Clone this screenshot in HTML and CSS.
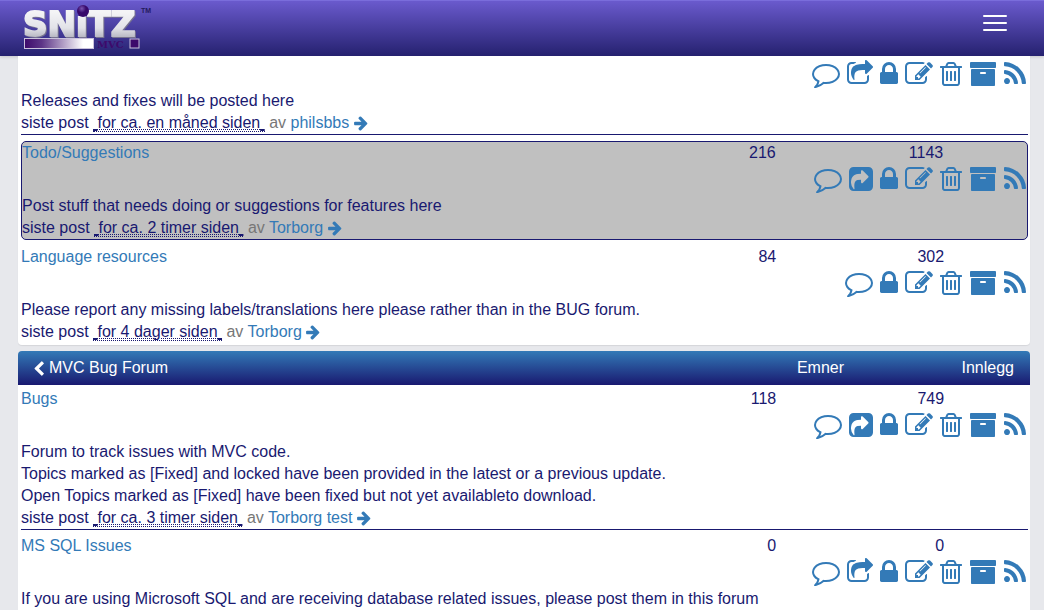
FILE: index.html
```html
<!DOCTYPE html>
<html lang="no">
<head>
<meta charset="utf-8">
<meta name="viewport" content="width=device-width, initial-scale=1">
<title>Snitz MVC</title>
<link rel="stylesheet" href="styles.css">
</head>
<body>
<svg class="sprite" aria-hidden="true">
  <symbol id="comment" viewBox="0 0 1792 1792"><path d="M896 384q-204 0-381.5 69.5t-282 187.5-104.5 255q0 112 71.5 213.5t201.5 175.5l87 50-27 96q-24 91-70 172 152-63 275-171l43-38 57 6q69 8 130 8 204 0 381.5-69.5t282-187.5 104.5-255-104.5-255-282-187.5-381.5-69.5zm896 512q0 174-120 321.5t-326 233-450 85.5q-70 0-145-8-198 175-460 242-49 14-114 22h-5q-15 0-27-10.5t-16-27.5v-1q-3-4-.5-12t2-10 4.5-9.5l6-9 7-8.5 8-9q7-8 31-34.5t34.5-38 31-39.5 32.5-51 27-59 26-76q-157-89-247.5-220t-90.5-281q0-174 120-321.5t326-233 450-85.5 450 85.5 326 233 120 321.5z"/></symbol>
  <symbol id="share-open" viewBox="64 0 1664 1792"><path d="M1472 989v259q0 119-84.5 203.5t-203.5 84.5h-832q-119 0-203.5-84.5t-84.5-203.5v-832q0-119 84.5-203.5t203.5-84.5h255q13 0 22.500 9.500t9.500 22.500q0 27-26 32-77 26-133 60-10 4-16 4h-112q-66 0-113 47t-47 113v832q0 66 47 113t113 47h832q66 0 113-47t47-113v-214q0-19 18-29 28-13 54-37 16-16 35-8 21 9 21 29zm237-496l-384 384q-18 19-45 19-12 0-25-5-39-17-39-59v-192h-160q-323 0-438 131-119 137-74 473 3 23-20 34-8 2-12 2-16 0-26-13-10-14-21-31t-39.5-68.5-49.5-99.5-38.5-114-17.5-122q0-49 3.500-91t14-90 28-88 47-81.5 68.500-74 94.500-61.5 124.500-48.5 159.500-30.5 196.500-11h160v-192q0-42 39-59 13-5 25-5 26 0 45 19l384 384q19 19 19 45t-19 45z"/></symbol>
  <symbol id="share" viewBox="128 0 1536 1792"><path d="M1005 1147l352-352q19-19 19-45t-19-45l-352-352q-30-31-69-14-40 17-40 59v160q-119 0-216 19.5t-162.5 51-114 79-76.5 95.5-44.5 109-21.5 111.5-5 110.5q0 181 167 404 11 12 25 12 7 0 13-3 22-9 19-33-44-354 62-473 46-52 130-75.5t224-23.5v160q0 42 40 59 12 5 24 5 26 0 45-19zm659-731v960q0 119-84.5 203.5t-203.5 84.5h-960q-119 0-203.5-84.5t-84.5-203.5v-960q0-119 84.5-203.5t203.5-84.5h960q119 0 203.5 84.5t84.5 203.5z"/></symbol>
  <symbol id="lock" viewBox="320 0 1152 1792"><path d="M640 768h512v-192q0-106-75-181t-181-75-181 75-75 181v192zm832 96v576q0 40-28 68t-68 28h-960q-40 0-68-28t-28-68v-576q0-40 28-68t68-28h32v-192q0-184 132-316t316-132 316 132 132 316v192h32q40 0 68 28t28 68z"/></symbol>
  <symbol id="edit" viewBox="0 0 1792 1792"><path d="M888 1184l116-116-152-152-116 116v56h96v96h56zm440-720q-16-16-33 1l-350 350q-17 17-1 33t33-1l350-350q17-17 1-33zm80 594v190q0 119-84.5 203.5t-203.5 84.5h-832q-119 0-203.5-84.5t-84.5-203.5v-832q0-119 84.5-203.5t203.5-84.5h832q63 0 117 25 15 7 18 23 3 17-9 29l-49 49q-14 14-32 8-23-6-45-6h-832q-66 0-113 47t-47 113v832q0 66 47 113t113 47h832q66 0 113-47t47-113v-126q0-13 9-22l64-64q15-15 35-7t20 29zm-96-738l288 288-672 672h-288v-288zm444 132l-92 92-288-288 92-92q28-28 68-28t68 28l152 152q28 28 28 68t-28 68z"/></symbol>
  <symbol id="trash" viewBox="192 0 1408 1792"><path d="M704 736v576q0 14-9 23t-23 9h-64q-14 0-23-9t-9-23v-576q0-14 9-23t23-9h64q14 0 23 9t9 23zm256 0v576q0 14-9 23t-23 9h-64q-14 0-23-9t-9-23v-576q0-14 9-23t23-9h64q14 0 23 9t9 23zm256 0v576q0 14-9 23t-23 9h-64q-14 0-23-9t-9-23v-576q0-14 9-23t23-9h64q14 0 23 9t9 23zm128 724v-948h-896v948q0 22 7 40.5t14.5 27 10.5 8.5h832q3 0 10.5-8.5t14.5-27 7-40.5zm-672-1076h448l-48-117q-7-9-17-11h-317q-10 2-17 11zm928 32v64q0 14-9 23t-23 9h-96v948q0 83-47 143.5t-113 60.5h-832q-66 0-113-58.5t-47-141.5v-952h-96q-14 0-23-9t-9-23v-64q0-14 9-23t23-9h309l70-167q15-37 54-63t79-26h320q40 0 79 26t54 63l70 167h309q14 0 23 9t9 23z"/></symbol>
  <symbol id="archive" viewBox="0 0 1792 1792"><path d="M1088 832q0-26-19-45t-45-19h-256q-26 0-45 19t-19 45 19 45 45 19h256q26 0 45-19t19-45zm576-192v960q0 26-19 45t-45 19h-1408q-26 0-45-19t-19-45v-960q0-26 19-45t45-19h1408q26 0 45 19t19 45zm64-448v256q0 26-19 45t-45 19h-1536q-26 0-45-19t-19-45v-256q0-26 19-45t45-19h1536q26 0 45 19t19 45z"/></symbol>
  <symbol id="rss" viewBox="192 0 1408 1792"><path d="M576 1344q0 80-56 136t-136 56-136-56-56-136 56-136 136-56 136 56 56 136zm512 123q2 28-17 48-18 21-47 21h-135q-25 0-43-16.5t-20-41.5q-22-229-184.5-391.5t-391.5-184.5q-25-2-41.5-20t-16.5-43v-135q0-29 21-47 17-17 43-17h5q160 13 306 80.5t259 181.5q114 113 181.5 259t80.5 306zm512 2q2 27-18 47-18 20-46 20h-143q-26 0-44.5-17.5t-19.5-42.5q-12-215-101-408.5t-231.5-336-336-231.5-408.5-102q-25-1-42.5-19.5t-17.5-43.5v-143q0-28 20-46 18-18 44-18h3q262 13 501.5 120t425.5 294q187 186 294 425.5t120 501.5z"/></symbol>
  <symbol id="arrow" viewBox="128 128 1536 1664"><path d="M1600 960q0 54-37 91l-651 651q-39 37-91 37-51 0-90-37l-75-75q-38-38-38-91t38-91l293-293h-704q-52 0-84.5-37.5t-32.5-90.5v-128q0-53 32.5-90.5t84.5-37.5h704l-293-294q-38-36-38-90t38-90l75-75q38-38 90-38 53 0 91 38l651 651q37 35 37 90z"/></symbol>
  <symbol id="chevron" viewBox="384 0 1152 1664"><path d="M1427 301l-531 531 531 531q19 19 19 45t-19 45l-166 166q-19 19-45 19t-45-19l-742-742q-19-19-19-45t19-45l742-742q19-19 45-19t45 19l166 166q19 19 19 45t-19 45z"/></symbol>
</svg>

<header class="navbar">
  <a class="brand" href="#" aria-label="Snitz MVC">
    <svg class="logo" viewBox="0 0 132 48">
      <defs>
        <linearGradient id="metal" x1="0" y1="0" x2="0" y2="1"><stop offset="0.2" stop-color="#f4f4f6"/><stop offset="0.6" stop-color="#e2e2e8"/><stop offset="0.85" stop-color="#b4b4c0"/></linearGradient>
        <linearGradient id="bar" x1="0" y1="0" x2="1" y2="0"><stop offset="0" stop-color="#3d0a6b"/><stop offset="0.25" stop-color="#5d3587"/><stop offset="0.85" stop-color="#ffffff"/></linearGradient>
        <radialGradient id="ball" cx="0.4" cy="0.3" r="0.7"><stop offset="0" stop-color="#7a55b0"/><stop offset="0.5" stop-color="#37086b"/></radialGradient>
      </defs>
      <text class="logo-word" x="1" y="31">SNıTZ</text>
      <circle cx="61" cy="6" r="6" fill="url(#ball)"/>
      <text class="logo-tm" x="119" y="8">TM</text>
      <rect x="2.500" y="33.500" width="69" height="10" fill="url(#bar)" stroke="#c9c2dc"/>
      <text class="logo-mvc" x="75" y="43">MVC</text>
      <rect x="108" y="34" width="9" height="9" fill="#3d0a6b" stroke="#c9c2dc"/>
    </svg>
  </a>
  <button class="menu" type="button" aria-label="Meny"><span></span><span></span><span></span></button>
</header>

<main class="page">
  <section class="panel panel-upper">
    <article class="forum ruled">
      <div class="tools">
        <a href="#" aria-label="Nytt emne"><svg class="i28"><use href="#comment"/></svg></a>
        <a href="#" aria-label="Del"><svg class="i26"><use href="#share-open"/></svg></a>
        <a href="#" aria-label="Lås"><svg class="i18"><use href="#lock"/></svg></a>
        <a href="#" aria-label="Rediger"><svg class="i28"><use href="#edit"/></svg></a>
        <a href="#" aria-label="Slett"><svg class="i22"><use href="#trash"/></svg></a>
        <a href="#" aria-label="Arkiv"><svg class="i28"><use href="#archive"/></svg></a>
        <a href="#" aria-label="RSS"><svg class="i22"><use href="#rss"/></svg></a>
      </div>
      <p>Releases and fixes will be posted here</p>
      <p>siste post <abbr><i> </i>for ca. en måned siden<i> </i></abbr> <span class="by">av</span> <a href="#">philsbbs</a> <a href="#" aria-label="Siste post"><svg class="go"><use href="#arrow"/></svg></a></p>
    </article>

    <article class="forum selected">
      <div class="summary"><a href="#">Todo/Suggestions</a><span>216</span><span>1143</span></div>
      <div class="tools">
        <a href="#" aria-label="Nytt emne"><svg class="i28"><use href="#comment"/></svg></a>
        <a href="#" aria-label="Del"><svg class="i24"><use href="#share"/></svg></a>
        <a href="#" aria-label="Lås"><svg class="i18"><use href="#lock"/></svg></a>
        <a href="#" aria-label="Rediger"><svg class="i28"><use href="#edit"/></svg></a>
        <a href="#" aria-label="Slett"><svg class="i22"><use href="#trash"/></svg></a>
        <a href="#" aria-label="Arkiv"><svg class="i28"><use href="#archive"/></svg></a>
        <a href="#" aria-label="RSS"><svg class="i22"><use href="#rss"/></svg></a>
      </div>
      <p>Post stuff that needs doing or suggestions for features here</p>
      <p>siste post <abbr><i> </i>for ca. 2 timer siden<i> </i></abbr> <span class="by">av</span> <a href="#">Torborg</a> <a href="#" aria-label="Siste post"><svg class="go"><use href="#arrow"/></svg></a></p>
    </article>

    <article class="forum">
      <div class="summary"><a href="#">Language resources</a><span>84</span><span>302</span></div>
      <div class="tools">
        <a href="#" aria-label="Nytt emne"><svg class="i28"><use href="#comment"/></svg></a>
        <a href="#" aria-label="Lås"><svg class="i18"><use href="#lock"/></svg></a>
        <a href="#" aria-label="Rediger"><svg class="i28"><use href="#edit"/></svg></a>
        <a href="#" aria-label="Slett"><svg class="i22"><use href="#trash"/></svg></a>
        <a href="#" aria-label="Arkiv"><svg class="i28"><use href="#archive"/></svg></a>
        <a href="#" aria-label="RSS"><svg class="i22"><use href="#rss"/></svg></a>
      </div>
      <p>Please report any missing labels/translations here please rather than in the BUG forum.</p>
      <p>siste post <abbr><i> </i>for 4 dager siden<i> </i></abbr> <span class="by">av</span> <a href="#">Torborg</a> <a href="#" aria-label="Siste post"><svg class="go"><use href="#arrow"/></svg></a></p>
    </article>
  </section>

  <section class="category">
    <div class="heading">
      <h2><a href="#"><svg class="back"><use href="#chevron"/></svg>MVC Bug Forum</a></h2>
      <span>Emner</span><span>Innlegg</span>
    </div>
    <div class="panel">
      <article class="forum ruled">
        <div class="summary"><a href="#">Bugs</a><span>118</span><span>749</span></div>
        <div class="tools">
          <a href="#" aria-label="Nytt emne"><svg class="i28"><use href="#comment"/></svg></a>
          <a href="#" aria-label="Del"><svg class="i24"><use href="#share"/></svg></a>
          <a href="#" aria-label="Lås"><svg class="i18"><use href="#lock"/></svg></a>
          <a href="#" aria-label="Rediger"><svg class="i28"><use href="#edit"/></svg></a>
          <a href="#" aria-label="Slett"><svg class="i22"><use href="#trash"/></svg></a>
          <a href="#" aria-label="Arkiv"><svg class="i28"><use href="#archive"/></svg></a>
          <a href="#" aria-label="RSS"><svg class="i22"><use href="#rss"/></svg></a>
        </div>
        <p>Forum to track issues with MVC code.<br>Topics marked as [Fixed] and locked have been provided in the latest or a previous update.<br>Open Topics marked as [Fixed] have been fixed but not yet availableto download.</p>
        <p>siste post <abbr><i> </i>for ca. 3 timer siden<i> </i></abbr> <span class="by">av</span> <a href="#">Torborg test</a> <a href="#" aria-label="Siste post"><svg class="go"><use href="#arrow"/></svg></a></p>
      </article>

      <article class="forum">
        <div class="summary"><a href="#">MS SQL Issues</a><span>0</span><span>0</span></div>
        <div class="tools">
          <a href="#" aria-label="Nytt emne"><svg class="i28"><use href="#comment"/></svg></a>
          <a href="#" aria-label="Del"><svg class="i26"><use href="#share-open"/></svg></a>
          <a href="#" aria-label="Lås"><svg class="i18"><use href="#lock"/></svg></a>
          <a href="#" aria-label="Rediger"><svg class="i28"><use href="#edit"/></svg></a>
          <a href="#" aria-label="Slett"><svg class="i22"><use href="#trash"/></svg></a>
          <a href="#" aria-label="Arkiv"><svg class="i28"><use href="#archive"/></svg></a>
          <a href="#" aria-label="RSS"><svg class="i22"><use href="#rss"/></svg></a>
        </div>
        <p>If you are using Microsoft SQL and are receiving database related issues, please post them in this forum</p>
      </article>
    </div>
  </section>
</main>
</body>
</html>
```
FILE: styles.css
```css
* { box-sizing: border-box; }

body {
  margin: 0;
  background: #e7e8ec;
  color: #191970;
  font: 16px/22px "Liberation Sans", Arial, sans-serif;
}

a { color: #337ab7; text-decoration: none; }
p, h2 { margin: 0; }
svg { fill: currentColor; }
.sprite { display: none; }

.navbar {
  display: flex;
  justify-content: space-between;
  align-items: flex-start;
  height: 56px;
  padding: 4px 37px 0 22px;
  border-top: 1px solid #7a6ddb;
  background: linear-gradient(#6a5acd, #25216f);
  box-shadow: 0 1px 3px rgba(0, 0, 0, 0.15);
}

.brand { display: block; }
.logo { display: block; width: 132px; height: 48px; overflow: visible; }
.logo-word {
  font: bold 34px "DejaVu Sans", sans-serif;
  fill: url(#metal);
  stroke: url(#metal);
  stroke-width: 2px;
  filter: drop-shadow(1px 1px 0 #77738f);
}
.logo-tm { font: bold 7px "Liberation Sans", sans-serif; fill: #241a5c; }
.logo-mvc { font: bold 10px "DejaVu Serif", serif; fill: #3d0a6b; }

.menu {
  display: flex;
  flex-direction: column;
  gap: 5px;
  width: 24px;
  margin-top: 10px;
  padding: 0;
  border: 0;
  background: none;
}
.menu span { width: 100%; height: 2px; border-radius: 1px; background: #fff; }

.page { padding: 0 14px 0 18px; }
.panel { padding: 3px 2px 0 3px; background: #fff; }
.panel-upper {
  margin-bottom: 6px;
  padding-bottom: 2px;
  border-radius: 0 0 4px 4px;
  box-shadow: 0 1px 1px rgba(0, 0, 0, 0.08);
}

.forum + .forum { margin-top: 6px; }
.ruled { border-bottom: 1px solid #191970; }
.ruled + .forum:not(.selected) { margin-top: 5px; }
.selected {
  border: 1px solid #191970;
  border-radius: 5px;
  background: #c0c0c0;
}

.summary { display: grid; grid-template-columns: 7fr 2fr 2fr 1fr; }
.summary span { text-align: right; }

.tools {
  display: flex;
  justify-content: flex-end;
  gap: 7px;
  height: 31px;
  padding: 1px 2px 0 0;
}
.selected .tools { padding-right: 1px; }
.tools svg { display: block; height: 28px; }
.i18 { width: 18px; }
.i22 { width: 22px; }
.i24 { width: 24px; }
.i26 { width: 26px; }
.i28 { width: 28px; }

abbr {
  border-bottom: 1px dotted #191970;
  text-decoration: underline dotted 1px;
}
abbr i { white-space: pre; text-decoration: underline solid 2px; }
.by { color: #777; }
.go { width: 14px; height: 15px; vertical-align: -3px; }

.heading {
  display: grid;
  grid-template-columns: 1fr auto 170px;
  align-items: center;
  height: 34px;
  padding: 0 16px;
  border-radius: 4px 4px 0 0;
  background: linear-gradient(#337ab7, #191970);
  color: #fff;
}
.heading h2 { font-size: 16px; font-weight: normal; }
.heading a { display: flex; align-items: center; gap: 4px; color: #fff; }
.heading span { text-align: right; }
.back { width: 11px; height: 15px; }
```
